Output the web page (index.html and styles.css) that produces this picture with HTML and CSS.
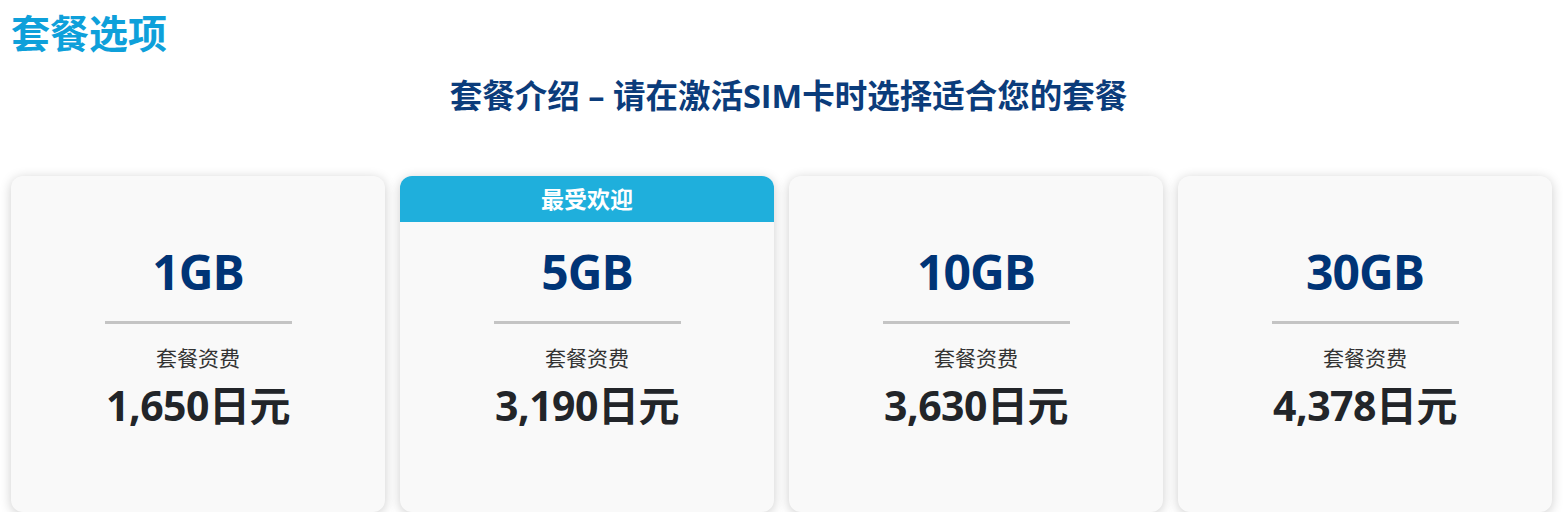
FILE: index.html
```html
<!DOCTYPE html>
<html lang="zh-CN">
<head>
<meta charset="utf-8">
<title>套餐选项</title>
<link rel="stylesheet" href="styles.css">
</head>
<body>
<div class="page">
  <h1 class="title">套餐选项</h1>
  <h2 class="subtitle">套餐介绍 – 请在激活SIM卡时选择适合您的套餐</h2>
  <div class="plans">
    <div class="card">
      <div class="gb">1GB</div>
      <div class="divider"></div>
      <div class="label">套餐资费</div>
      <div class="price">1,650日元</div>
    </div>
    <div class="card popular">
      <div class="badge">最受欢迎</div>
      <div class="gb">5GB</div>
      <div class="divider"></div>
      <div class="label">套餐资费</div>
      <div class="price">3,190日元</div>
    </div>
    <div class="card">
      <div class="gb">10GB</div>
      <div class="divider"></div>
      <div class="label">套餐资费</div>
      <div class="price">3,630日元</div>
    </div>
    <div class="card">
      <div class="gb">30GB</div>
      <div class="divider"></div>
      <div class="label">套餐资费</div>
      <div class="price">4,378日元</div>
    </div>
  </div>
</div>
</body>
</html>
```

FILE: styles.css
```css
html, body {
  margin: 0;
  padding: 0;
  background: #ffffff;
}

body {
  font-family: "Open Sans", "Noto Sans CJK SC", sans-serif;
  color: #222529;
}

.page {
  padding: 8px 11px 0 11px;
}

.title {
  margin: 0;
  font-size: 39px;
  line-height: 50px;
  font-weight: 700;
  color: #0ea0da;
}

.subtitle {
  margin: 16px 0 0 14px;
  text-align: center;
  font-size: 32.5px;
  line-height: 44px;
  font-weight: 700;
  color: #0b3c7b;
}

.plans {
  margin-top: 58px;
  display: grid;
  grid-template-columns: repeat(4, 1fr);
  gap: 15px;
}

.card {
  position: relative;
  height: 336px;
  background: #f9f9f9;
  border-radius: 12px;
  box-shadow: 0 2px 12px rgba(0, 0, 0, 0.2);
  display: flex;
  flex-direction: column;
  align-items: center;
  padding-top: 68px;
  box-sizing: border-box;
}

.badge {
  position: absolute;
  top: 0;
  left: 0;
  right: 0;
  height: 46px;
  line-height: 46px;
  background: #1fafdc;
  color: #ffffff;
  text-align: center;
  font-size: 23px;
  font-weight: 700;
  border-radius: 12px 12px 0 0;
}

.gb {
  font-size: 48px;
  line-height: 56px;
  font-weight: 700;
  color: #003476;
  letter-spacing: -1px;
}

.divider {
  width: 50%;
  height: 3px;
  background: #c4c4c4;
  margin-top: 21px;
}

.label {
  margin-top: 20px;
  font-size: 21px;
  line-height: 28px;
  color: #333333;
}

.price {
  margin-top: 8px;
  font-size: 41px;
  line-height: 50px;
  font-weight: 700;
  color: #222529;
  letter-spacing: -0.5px;
}
```
